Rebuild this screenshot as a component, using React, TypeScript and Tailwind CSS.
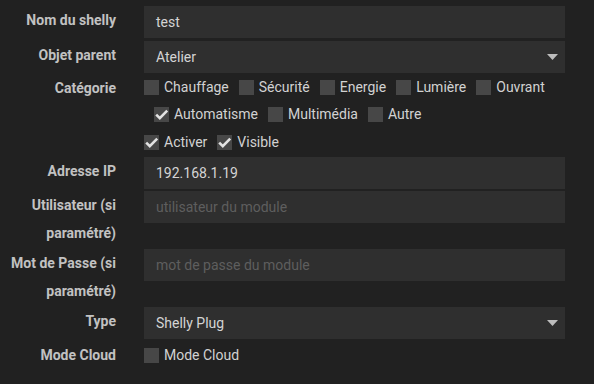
import { ReactNode } from 'react';

const font = { fontFamily: 'Roboto, "Noto Sans", sans-serif' };

const Check = ({ checked, label, className = '' }: { checked?: boolean; label: string; className?: string }) => (
  <label className={`flex items-center gap-[5px] text-[14px] text-[#d2d2d2] ${className}`}>
    <span className="relative block w-[15px] h-[15px] bg-[#474747]">
      {checked && (
        <svg className="absolute inset-0" width="15" height="15" viewBox="0 0 15 15">
          <path d="M2.2 7.6 L5.8 11.2 L13.2 3.6" fill="none" stroke="#e2e2e2" strokeWidth="2.6" />
        </svg>
      )}
    </span>
    <span>{label}</span>
  </label>
);

const Row = ({ label, children, className = '' }: { label?: ReactNode; children: ReactNode; className?: string }) => (
  <div className={`flex gap-[28px] ${className}`}>
    <div className="w-[116px] shrink-0 text-right font-bold text-[14px] leading-[28px] text-[#c2c2c2]">{label}</div>
    <div className="w-[421px]">{children}</div>
  </div>
);

const Input = ({ value, placeholder }: { value?: string; placeholder?: string }) => (
  <div className="h-[32px] bg-[#2f2f2f] pl-[12px] flex items-center text-[14px]">
    {value ? <span className="text-[#d4d4d4]">{value}</span> : <span className="text-[#5e5e5e]">{placeholder}</span>}
  </div>
);

const Select = ({ value }: { value: string }) => (
  <div className="h-[32px] bg-[#2f2f2f] pl-[12px] pr-[7px] flex items-center justify-between text-[14px] text-[#d4d4d4]">
    <span>{value}</span>
    <svg width="11" height="6" viewBox="0 0 11 6">
      <path d="M0 0 H11 L5.5 6 Z" fill="#bdbdbd" />
    </svg>
  </div>
);

const categories = ['Chauffage', 'Sécurité', 'Energie', 'Lumière', 'Ouvrant', 'Automatisme', 'Multimédia', 'Autre'];

export default function App() {
  return (
    <div className="w-[594px] h-[384px] bg-[#212121] pt-[6px]" style={font}>
      <Row label="Nom du shelly">
        <Input value="test" />
      </Row>
      <Row label="Objet parent" className="mt-[3px]">
        <Select value="Atelier" />
      </Row>
      <Row label="Catégorie" className="mt-[1px]">
        <div className="flex flex-wrap">
          {categories.map((c, i) => (
            <div key={c} className={`h-[27px] flex items-center ${i > 0 ? 'ml-[10px]' : ''}`}>
              <Check label={c} checked={c === 'Automatisme'} />
            </div>
          ))}
        </div>
      </Row>
      <Row>
        <div className="h-[28px] flex items-center gap-[10px]">
          <Check label="Activer" checked />
          <Check label="Visible" checked />
        </div>
      </Row>
      <Row label="Adresse IP" className="mt-[1px]">
        <Input value="192.168.1.19" />
      </Row>
      <Row label={<>Utilisateur (si<br />paramétré)</>} className="mt-[2px]">
        <Input placeholder="utilisateur du module" />
      </Row>
      <Row label={<>Mot de Passe (si<br />paramétré)</>} className="mt-[2px]">
        <Input placeholder="mot de passe du module" />
      </Row>
      <Row label="Type" className="mt-[2px]">
        <Select value="Shelly Plug" />
      </Row>
      <Row label="Mode Cloud" className="mt-[2px]">
        <div className="h-[28px] flex items-center">
          <Check label="Mode Cloud" />
        </div>
      </Row>
    </div>
  );
}
